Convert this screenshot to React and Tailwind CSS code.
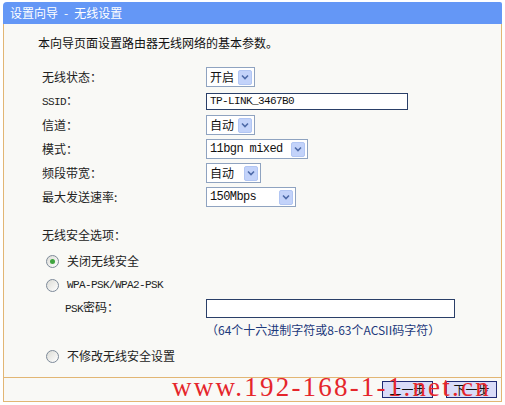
import React from "react";

const cjk = { fontFamily: '"Noto Sans CJK SC", "Noto Sans", sans-serif' };
const mono = { fontFamily: '"Liberation Mono", "Noto Sans CJK SC", monospace' };

const Chevron = () => (
  <span className="flex h-[15px] w-[14px] items-center justify-center rounded-[2px] bg-[#c3d3fa] border border-[#b2c6f3]">
    <svg width="8" height="6" viewBox="0 0 8 6">
      <path d="M1 1.5 L4 4.5 L7 1.5" fill="none" stroke="#4d6aa8" strokeWidth="1.6" />
    </svg>
  </span>
);

const Select = ({ value, width, isMono }) => (
  <div
    className={`flex h-[20px] items-center justify-between border border-[#8fa3c0] bg-white pl-[3px] pr-[2px] text-[12px] text-[#111] ${width}`}
  >
    {isMono ? (
      <span style={mono} className="text-[12px] tracking-[-0.6px]">{value}</span>
    ) : (
      <span style={cjk}>{value}</span>
    )}
    <Chevron />
  </div>
);

const Row = ({ label, children }) => (
  <div className="flex h-[24px] items-center">
    <div className="w-[202px] pl-[38px] text-[12px] text-[#222]">{label}</div>
    {children}
  </div>
);

const Radio = ({ checked }) => (
  <span className="flex h-[13px] w-[13px] items-center justify-center rounded-full border border-[#7d8a99] bg-gradient-to-br from-[#dcdcd6] to-white">
    {checked && <span className="h-[5px] w-[5px] rounded-full bg-[#3fa43f]" />}
  </span>
);

export default function App() {
  return (
    <div className="relative h-[405px] w-[505px] overflow-hidden bg-white" style={cjk}>
      <div className="ml-[3px] w-[499px] pt-[2px]">
        <div className="h-[22px] rounded-tl-[4px] rounded-tr-[2px] bg-[#6497f6] pl-[7px] text-[12px] leading-[22px] text-white">
          设置向导<span className="mx-[6px]">-</span>无线设置
        </div>
        <div className="border-x border-[#e2b674] bg-[#f9f9f6]">
          <div className="h-[353px]">
            <div className="pl-[34px] pt-[11px] text-[12px] leading-[16px] text-[#111]">
              本向导页面设置路由器无线网络的基本参数。
            </div>
            <div className="mt-[14px]">
              <Row label="无线状态：">
                <Select value="开启" width="w-[49px]" />
              </Row>
              <Row
                label={
                  <>
                    <span style={mono} className="text-[11px] tracking-[-0.6px]">SSID</span>：
                  </>
                }
              >
                <div className="flex h-[17px] w-[202px] items-center border border-[#2a3f68] bg-white pl-[3px] text-[#111]">
                  <span style={mono} className="text-[11px] tracking-[-0.6px]">TP-LINK_3467B0</span>
                </div>
              </Row>
              <Row label="信道：">
                <Select value="自动" width="w-[49px]" />
              </Row>
              <Row label="模式：">
                <Select value="11bgn mixed" width="w-[102px]" isMono />
              </Row>
              <Row label="频段带宽：">
                <Select value="自动" width="w-[55px]" />
              </Row>
              <Row label="最大发送速率:">
                <Select value="150Mbps" width="w-[90px]" isMono />
              </Row>
            </div>
            <div className="mt-[14px] flex h-[24px] items-center pl-[38px] text-[12px] text-[#222]">
              无线安全选项：
            </div>
            <div className="mt-[2px] flex h-[24px] items-center gap-[8px] pl-[42px] text-[12px] text-[#222]">
              <Radio checked />
              <span>关闭无线安全</span>
            </div>
            <div className="flex h-[24px] items-center gap-[8px] pl-[42px] text-[12px] text-[#222]">
              <Radio />
              <span style={mono} className="text-[11px] tracking-[-0.6px]">WPA-PSK/WPA2-PSK</span>
            </div>
            <div className="flex h-[22px] items-center">
              <div className="w-[202px] pl-[61px] text-[12px] text-[#222]">
                <span style={mono} className="text-[11px] tracking-[-0.6px]">PSK</span>密码：
              </div>
              <div className="h-[19px] w-[249px] border border-[#2a3f68] bg-white" />
            </div>
            <div className="flex h-[22px] items-center pl-[202px] text-[12px] text-[#1d3a7c]">
              （64个十六进制字符或8-63个ACSII码字符）
            </div>
            <div className="mt-[3px] flex h-[24px] items-center gap-[8px] pl-[42px] text-[12px] text-[#222]">
              <Radio />
              <span>不修改无线安全设置</span>
            </div>
          </div>
          <div className="flex h-[25px] items-center justify-end gap-[13px] border-y border-[#e2b674] pr-[4px]">
            <button className="h-[17px] w-[51px] border border-[#1f2a74] bg-[#d9dcf8] text-[12px] leading-[15px] text-[#111]">
              上一步
            </button>
            <button className="h-[17px] w-[51px] border border-[#1f2a74] bg-[#d9dcf8] text-[12px] leading-[15px] text-[#111]">
              下一步
            </button>
          </div>
        </div>
      </div>
      <div
        className="pointer-events-none absolute left-[172px] top-[373px] whitespace-nowrap text-[27px] leading-[28px] text-[#e5262b]"
        style={{ fontFamily: '"Liberation Serif", serif', letterSpacing: "2.2px" }}
      >
        www.192-168-1-1.net.cn
      </div>
    </div>
  );
}
